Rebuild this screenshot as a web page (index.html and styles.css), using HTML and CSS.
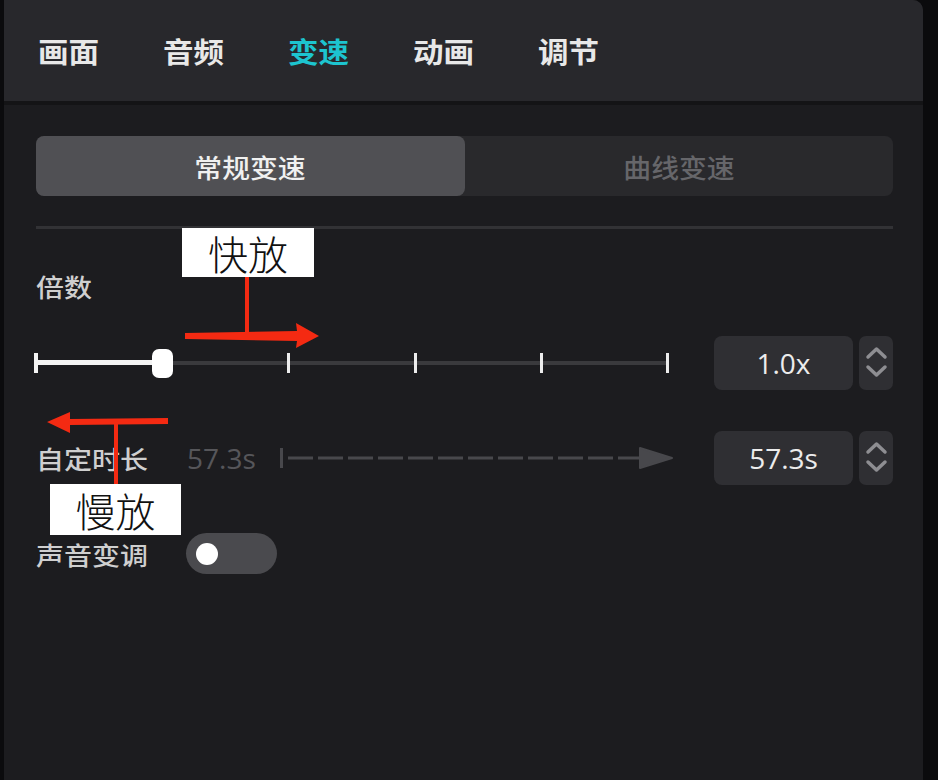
FILE: index.html
```html
<!DOCTYPE html>
<html lang="zh-CN">
<head>
    <meta charset="UTF-8">
    <meta name="viewport" content="width=device-width, initial-scale=1.0">
    <title>变速</title>
    <link rel="stylesheet" href="styles.css">
</head>
<body>
    <div class="screen">
        <div class="panel">
            <!-- 顶部标签 -->
            <div class="tabs">
                <span class="tab"><span class="wide">画面</span></span>
                <span class="tab"><span class="wide">音频</span></span>
                <span class="tab active"><span class="wide">变速</span></span>
                <span class="tab"><span class="wide">动画</span></span>
                <span class="tab"><span class="wide">调节</span></span>
            </div>

            <div class="panel-body">
                <div class="segmented">
                    <div class="seg seg-active"><span class="wide">常规变速</span></div>
                    <div class="seg"><span class="wide">曲线变速</span></div>
                </div>
                <div class="divider"></div>

                <div class="label label-speed"><span class="wide">倍数</span></div>
                <div class="row row-speed">
                    <div class="slider">
                        <div class="slider-track"></div>
                        <div class="slider-fill" style="width: 126px"></div>
                        <div class="slider-stops">
                            <span class="stop"><i class="tick tick-start"></i></span>
                            <span class="stop"><i class="knob"></i></span>
                            <span class="stop"><i class="tick"></i></span>
                            <span class="stop"><i class="tick"></i></span>
                            <span class="stop"><i class="tick"></i></span>
                            <span class="stop"><i class="tick"></i></span>
                        </div>
                    </div>
                    <div class="field">
                        <div class="field-value">1.0x</div>
                        <div class="stepper">
                            <svg width="34" height="54" viewBox="0 0 34 54">
                                <polyline points="9,21 17.5,13 26,21" />
                                <polyline points="9,31 17.5,39 26,31" />
                            </svg>
                        </div>
                    </div>
                </div>

                <div class="row row-duration">
                    <div class="label label-duration"><span class="wide">自定时长</span></div>
                    <div class="duration-old">57.3s</div>
                    <svg class="duration-arrow" width="396" height="24" viewBox="0 0 396 24">
                        <rect x="2" y="2" width="3" height="20" />
                        <line x1="10" y1="12" x2="364" y2="12" />
                        <polygon points="362,2 394,12 362,22" />
                    </svg>
                    <div class="field">
                        <div class="field-value">57.3s</div>
                        <div class="stepper">
                            <svg width="34" height="54" viewBox="0 0 34 54">
                                <polyline points="9,21 17.5,13 26,21" />
                                <polyline points="9,31 17.5,39 26,31" />
                            </svg>
                        </div>
                    </div>
                </div>

                <div class="row row-pitch">
                    <div class="label label-pitch"><span class="wide">声音变调</span></div>
                    <div class="toggle"><span class="toggle-knob"></span></div>
                </div>
            </div>
        </div>
        <div class="screen-edge"></div>

        <!-- 标注 -->
        <svg class="marks" width="938" height="780" viewBox="0 0 938 780">
            <rect x="245" y="276" width="4" height="58" />
            <polygon points="185,333 297,331 296,323 319,336 296,348 297,341 185,339" />
            <rect x="114" y="423" width="4" height="62" />
            <polygon points="168,418 70,419 70,412 47,422 70,433 70,425 168,424" />
        </svg>
        <div class="note note-fast">快放</div>
        <div class="note note-slow">慢放</div>
    </div>
</body>
</html>
```

FILE: styles.css
```css
body {
    margin: 0;
    padding: 0;
    font-family: "Noto Sans CJK SC", sans-serif;
}
.screen {
    position: relative;
    display: flex;
    width: 938px;
    height: 780px;
    padding-left: 4px;
    box-sizing: border-box;
    background-color: #0b0b0d;
    overflow: hidden;
}
.panel {
    width: 919px;
    height: 100%;
    background-color: #1c1c1f;
    border-radius: 0 10px 0 0;
    overflow: hidden;
}
.screen-edge {
    flex: 1;
}
/* 截图里的字偏宽，横向拉一点 */
.wide {
    display: inline-block;
    transform-origin: left center;
}
.tabs {
    display: flex;
    align-items: center;
    height: 101px;
    padding-left: 34px;
    background-color: #28282c;
    border-bottom: 4px solid #141416;
}
.tab {
    width: 125px;
    font-size: 28px;
    font-weight: 700;
    color: #e8e8e8;
}
.tab .wide {
    transform: scaleX(1.09);
}
.tab.active {
    color: #1dc4cf;
}
.panel-body {
    padding: 0 30px 0 32px;
}
.segmented {
    display: flex;
    height: 60px;
    margin-top: 31px;
    background-color: #29292c;
    border-radius: 8px;
}
.seg {
    flex: 1;
    display: flex;
    align-items: center;
    justify-content: center;
    font-size: 26px;
    font-weight: 500;
    color: #66666a;
    border-radius: 8px;
}
.seg .wide {
    transform: scaleX(1.07);
    transform-origin: center;
}
.seg-active {
    background-color: #505054;
    color: #f0f0f0;
}
.divider {
    height: 3px;
    margin-top: 30px;
    background-color: #323235;
}
.label {
    font-size: 25px;
    font-weight: 500;
    color: #cfcfcf;
    line-height: 28px;
}
.label .wide {
    transform: scaleX(1.12);
}
.label-speed {
    margin-top: 43px;
    height: 28px;
}
.row {
    display: flex;
    align-items: center;
}
.row-speed {
    height: 54px;
    margin-top: 36px;
}
.row-duration {
    height: 54px;
    margin-top: 41px;
}
.row-pitch {
    height: 41px;
    margin-top: 48px;
}

/* 滑块 */
.slider {
    position: relative;
    width: 654px;
    height: 30px;
    margin-left: -11px;
}
.slider-track {
    position: absolute;
    left: 11px;
    right: 11px;
    top: 13px;
    height: 4px;
    background-color: #3a3a3d;
}
.slider-fill {
    position: absolute;
    left: 11px;
    top: 12px;
    height: 5px;
    background-color: #f4f4f4;
}
.slider-stops {
    position: relative;
    display: flex;
    justify-content: space-between;
    height: 100%;
}
.stop {
    width: 22px;
    display: flex;
    align-items: center;
    justify-content: center;
}
.tick {
    width: 3px;
    height: 20px;
    background-color: #ececec;
}
.tick-start {
    width: 4px;
    background-color: #f4f4f4;
}
.knob {
    width: 21px;
    height: 29px;
    border-radius: 7px;
    background-color: #ffffff;
}

/* 数值输入 */
.field {
    display: flex;
    gap: 6px;
    margin-left: auto;
}
.field-value {
    width: 139px;
    height: 54px;
    display: flex;
    align-items: center;
    justify-content: center;
    background-color: #2f2f33;
    border-radius: 8px;
    font-family: "Open Sans", sans-serif;
    font-size: 28px;
    color: #ececec;
}
.stepper {
    width: 34px;
    height: 54px;
    background-color: #2f2f33;
    border-radius: 7px;
}
.stepper svg {
    display: block;
}
.stepper polyline {
    fill: none;
    stroke: #8e8e92;
    stroke-width: 3.5;
    stroke-linecap: round;
    stroke-linejoin: round;
}
.label-duration {
    width: 151px;
}
.duration-old {
    width: 91px;
    font-family: "Open Sans", sans-serif;
    font-size: 28px;
    color: #56565a;
}
.duration-arrow rect,
.duration-arrow polygon {
    fill: #48484c;
}
.duration-arrow polygon {
    stroke: #48484c;
    stroke-width: 2;
    stroke-linejoin: round;
}
.duration-arrow line {
    stroke: #48484c;
    stroke-width: 3;
    stroke-dasharray: 25 5;
}
.label-pitch {
    width: 150px;
}
.toggle {
    width: 91px;
    height: 41px;
    border-radius: 21px;
    background-color: #4a4a4e;
    display: flex;
    align-items: center;
    padding-left: 10px;
    box-sizing: border-box;
}
.toggle-knob {
    width: 22px;
    height: 22px;
    border-radius: 50%;
    background-color: #ffffff;
}

/* 标注层 */
.marks {
    position: absolute;
    left: 0;
    top: 0;
    pointer-events: none;
}
.marks rect,
.marks polygon {
    fill: #f42a12;
}
.note {
    position: absolute;
    display: flex;
    align-items: center;
    justify-content: center;
    background-color: #ffffff;
    color: #111111;
    font-size: 40px;
    font-weight: 300;
}
.note-fast {
    left: 182px;
    top: 228px;
    width: 132px;
    height: 49px;
}
.note-slow {
    left: 50px;
    top: 484px;
    width: 131px;
    height: 51px;
}
```
